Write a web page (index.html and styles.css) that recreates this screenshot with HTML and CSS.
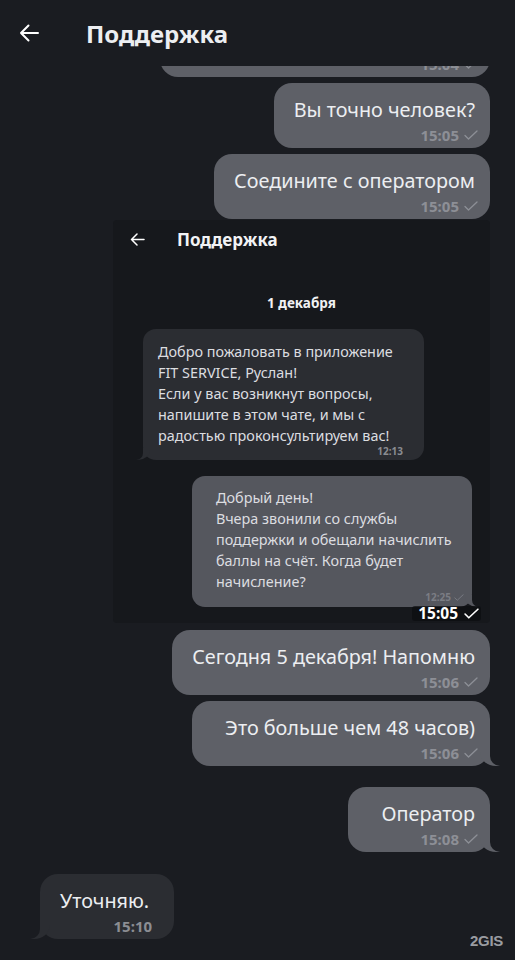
FILE: index.html
```html
<!DOCTYPE html>
<html lang="ru">
<head>
    <meta charset="UTF-8">
    <meta name="viewport" content="width=device-width, initial-scale=1.0">
    <title>Поддержка</title>
    <link rel="stylesheet" href="styles.css">
</head>
<body>
    <header class="topbar">
        <svg class="back" width="20" height="18" viewBox="0 0 20 18">
            <path d="M19 9H2M9.5 1.5L2 9l7.5 7.5" fill="none" stroke="#fff" stroke-width="2" stroke-linecap="round" stroke-linejoin="round"/>
        </svg>
        <h1>Поддержка</h1>
    </header>

    <main class="chat">
        <!-- сообщение обрезано шапкой -->
        <div class="bubble out cut">
            <div class="text">Нужна помощь</div>
            <div class="meta">15:04 <svg class="tick" viewBox="0 0 14 10"><path d="M1 5.5l3.5 3.5L13 1"/></svg></div>
        </div>

        <div class="bubble out">
            <div class="text">Вы точно человек?</div>
            <div class="meta">15:05 <svg class="tick" viewBox="0 0 14 10"><path d="M1 5.5l3.5 3.5L13 1"/></svg></div>
        </div>

        <div class="bubble out">
            <div class="text">Соедините с оператором</div>
            <div class="meta">15:05 <svg class="tick" viewBox="0 0 14 10"><path d="M1 5.5l3.5 3.5L13 1"/></svg></div>
        </div>

        <!-- скриншот, отправленный картинкой -->
        <div class="shot">
            <div class="shot-head">
                <svg class="back" width="15" height="13" viewBox="0 0 15 13">
                    <path d="M14 6.5H1.5M7 1L1.5 6.5 7 12" fill="none" stroke="#fff" stroke-width="1.5" stroke-linecap="round" stroke-linejoin="round"/>
                </svg>
                <span class="shot-title">Поддержка</span>
            </div>
            <div class="shot-date">1 декабря</div>
            <div class="shot-list">
                <div class="mini in tail-l">
                    <div class="mini-text">Добро пожаловать в приложение<br>FIT SERVICE, Руслан!<br>Если у вас возникнут вопросы,<br>напишите в этом чате, и мы с<br>радостью проконсультируем вас!</div>
                    <div class="mini-meta">12:13</div>
                </div>
                <div class="mini out tail-r">
                    <div class="mini-text">Добрый день!<br>Вчера звонили со службы<br>поддержки и обещали начислить<br>баллы на счёт. Когда будет<br>начисление?</div>
                    <div class="mini-meta">12:25 <svg class="tick mini-tick" viewBox="0 0 14 10"><path d="M1 5.5l3.5 3.5L13 1"/></svg></div>
                </div>
            </div>
            <div class="shot-time">15:05 <svg class="tick white" viewBox="0 0 14 10"><path d="M1 5.5l3.5 3.5L13 1"/></svg></div>
        </div>

        <div class="bubble out">
            <div class="text">Сегодня 5 декабря! Напомню</div>
            <div class="meta">15:06 <svg class="tick" viewBox="0 0 14 10"><path d="M1 5.5l3.5 3.5L13 1"/></svg></div>
        </div>

        <div class="bubble out tail-r">
            <div class="text">Это больше чем 48 часов)</div>
            <div class="meta">15:06 <svg class="tick" viewBox="0 0 14 10"><path d="M1 5.5l3.5 3.5L13 1"/></svg></div>
        </div>

        <div class="bubble out tail-r group">
            <div class="text">Оператор</div>
            <div class="meta">15:08 <svg class="tick" viewBox="0 0 14 10"><path d="M1 5.5l3.5 3.5L13 1"/></svg></div>
        </div>

        <div class="bubble in tail-l group last">
            <div class="text">Уточняю.</div>
            <div class="meta">15:10</div>
        </div>
    </main>

    <div class="watermark">2GIS</div>
</body>
</html>
```

FILE: styles.css
```css
body {
    font-family: "Noto Sans", "Open Sans", sans-serif;
    background-color: #1a1c21;
    color: #eceef1;
    margin: 0;
    padding: 0;
    width: 515px;
    height: 960px;
    overflow: hidden;
    position: relative;
}

.topbar {
    height: 66px;
    display: flex;
    align-items: center;
    padding: 0 0 0 19px;
    box-sizing: border-box;
    position: relative;
    z-index: 2;
    background-color: #1a1c21;
}

.back {
    display: block;
}

h1 {
    font-size: 24px;
    font-weight: 700;
    margin: 0 0 0 47px;
    letter-spacing: 0;
}

.chat {
    display: flex;
    flex-direction: column;
    align-items: flex-end;
    gap: 6px;
    padding: 0 25px 0 40px;
}

.bubble {
    position: relative;
    background-color: #5e6067;
    border-radius: 18px;
    padding: 14px 12px 4px 20px;
    box-sizing: border-box;
    height: 65px;
    text-align: right;
}

.bubble.cut {
    margin-top: -54px;
    width: 330px;
}

.bubble.group {
    margin-top: 15px;
}

.bubble.last {
    margin-top: 16px;
}

.bubble.tail-r {
    padding-left: 33px;
}

.text {
    font-size: 19.8px;
    line-height: 26px;
    margin-right: 3px;
    white-space: nowrap;
}

.meta {
    font-size: 15px;
    line-height: 18px;
    margin-top: 3px;
    font-weight: 700;
    color: #8d8f96;
    display: flex;
    justify-content: flex-end;
    align-items: center;
    gap: 5px;
}

.tick {
    width: 14px;
    height: 10px;
    fill: none;
    stroke: #8d8f96;
    stroke-width: 1.3;
    stroke-linecap: round;
    stroke-linejoin: round;
}

.bubble.in {
    align-self: flex-start;
    background-color: #2b2d32;
    padding-left: 20px;
    padding-right: 22px;
}

.bubble.in .meta {
    color: #8b8d93;
}

/* хвостики */
.tail-r::before,
.tail-l::before {
    content: "";
    position: absolute;
    bottom: 0;
    width: 20px;
    height: 18px;
    background-color: inherit;
}

.tail-r::after,
.tail-l::after {
    content: "";
    position: absolute;
    bottom: 0;
    width: 20px;
    height: 18px;
    background-color: #1a1c21;
}

.tail-r::before {
    right: -10px;
    border-bottom-left-radius: 16px 14px;
}

.tail-r::after {
    right: -20px;
    border-bottom-left-radius: 10px;
}

.tail-l::before {
    left: -10px;
    border-bottom-right-radius: 16px 14px;
}

.tail-l::after {
    left: -20px;
    border-bottom-right-radius: 10px;
}

/* картинка со скриншотом */
.shot {
    position: relative;
    width: 377px;
    height: 403px;
    margin-top: -5px;
    margin-bottom: 1px;
    background-color: #16181c;
    border-radius: 4px;
    box-sizing: border-box;
    padding: 0 18px 0 30px;
    display: flex;
    flex-direction: column;
}

.shot-head {
    height: 38px;
    display: flex;
    align-items: center;
    margin-left: -13px;
}

.shot-title {
    font-size: 17px;
    font-weight: 700;
    margin-left: 32px;
    color: #f2f3f5;
}

.shot-date {
    text-align: center;
    font-size: 13.5px;
    font-weight: 700;
    margin: 35px 0 0 -12px;
    line-height: 20px;
    color: #f0f1f3;
}

.shot-list {
    display: flex;
    flex-direction: column;
    gap: 16px;
    margin-top: 16px;
}

.mini {
    position: relative;
    height: 131px;
    box-sizing: border-box;
    border-radius: 13px;
}

.mini.in {
    width: 281px;
    background-color: #2b2d32;
    padding: 12px 21px 0 15px;
}

.mini.out {
    width: 280px;
    align-self: flex-end;
    background-color: #55575e;
    padding: 11px 8px 0 24px;
}

.mini.tail-l::after,
.mini.tail-r::after {
    background-color: #16181c;
}

.mini.tail-l::before {
    left: -7px;
    width: 14px;
    height: 12px;
    border-bottom-right-radius: 12px 10px;
}

.mini.tail-l::after {
    left: -14px;
    width: 14px;
    height: 12px;
    border-bottom-right-radius: 7px;
}

.mini.tail-r::before {
    right: -7px;
    width: 14px;
    height: 12px;
    border-bottom-left-radius: 12px 10px;
}

.mini.tail-r::after {
    right: -14px;
    width: 14px;
    height: 12px;
    border-bottom-left-radius: 7px;
}

.mini-text {
    font-size: 14.4px;
    line-height: 21px;
    color: #dcdde0;
    white-space: nowrap;
}

.mini-meta {
    font-size: 10px;
    line-height: 11px;
    font-weight: 700;
    text-align: right;
    color: #8a8c91;
    margin-top: 0;
    display: flex;
    justify-content: flex-end;
    align-items: center;
    gap: 3px;
}

.mini.out .mini-meta {
    color: #7b7d84;
}

.mini-tick {
    width: 10px;
    height: 7px;
    stroke: #7b7d84;
}

.shot-time {
    position: absolute;
    right: 9px;
    bottom: 2px;
    padding: 0 2px 0 6px;
    border-radius: 3px;
    background-color: rgba(12, 13, 16, 0.7);
    font-size: 15.5px;
    font-weight: 700;
    color: #ffffff;
    line-height: 15px;
    display: flex;
    align-items: center;
    gap: 6px;
}

.tick.white {
    stroke: #ffffff;
    width: 15px;
    height: 11px;
    stroke-width: 1.5;
}

.watermark {
    position: absolute;
    right: 12px;
    bottom: 11px;
    font-family: "Liberation Sans", Arial, sans-serif;
    font-weight: 700;
    font-size: 15px;
    color: #9a9ca1;
    letter-spacing: -0.3px;
}
```
